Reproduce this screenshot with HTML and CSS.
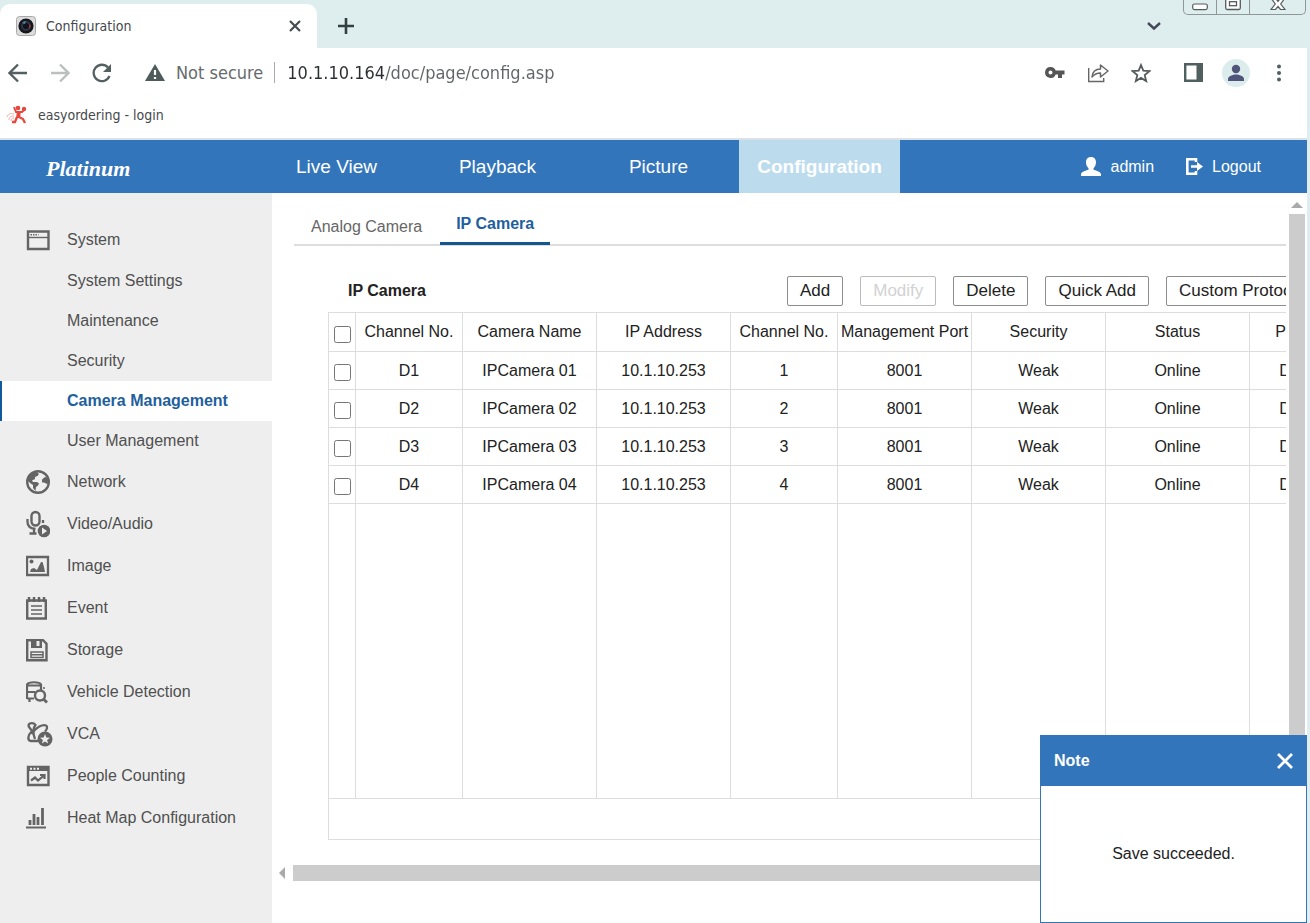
FILE: index.html
```html
<!doctype html>
<html lang="en">
  <head>
    <meta charset="UTF-8" />
    <meta name="viewport" content="width=device-width, initial-scale=1.0" />
    <title>Configuration</title>
    <link rel="stylesheet" href="styles.css">
  </head>
  <body>
    <div class="browser">
      <div class="tab-strip">
        <div class="browser-tab">
          <svg width="20" height="20" viewBox="0 0 20 20">
            <rect x="0.5" y="0.5" width="19" height="19" rx="3" fill="#dcdcdc" stroke="#a9a9a9" />
            <circle cx="10" cy="10" r="7.6" fill="#15171c" />
            <circle cx="10" cy="10" r="5" fill="#2c3446" />
            <circle cx="10" cy="10" r="3" fill="#11131a" />
            <path d="M6 7a5 5 0 0 1 4-2l-1 3z" fill="#4b86a5" />
            <path d="M13 8l2 2-2 3z" fill="#a5373c" />
          </svg>
          <span class="browser-tab-title">Configuration</span>
          <button class="icon-btn" aria-label="Close tab">
            <svg width="12" height="12" viewBox="0 0 12 12"><path d="M1 1l10 10M11 1L1 11" stroke="#474c4e" stroke-width="2.2" /></svg>
          </button>
        </div>
        <button class="icon-btn new-tab" aria-label="New tab">
          <svg width="16" height="16" viewBox="0 0 16 16"><path d="M8 0v16M0 8h16" stroke="#33403f" stroke-width="2.6" /></svg>
        </button>
        <button class="icon-btn tab-search" aria-label="Search tabs">
          <svg width="14" height="10" viewBox="0 0 14 10"><path d="M1 2l6 5.5L13 2" fill="none" stroke="#43495a" stroke-width="2.4" /></svg>
        </button>
        <div class="window-controls">
          <button aria-label="Minimize">
            <svg width="16" height="14" viewBox="0 0 16 14"><rect x="0.7" y="4" width="14.6" height="5.6" rx="1.8" fill="#fff" stroke="#555b5d" stroke-width="1.2" /></svg>
          </button>
          <button aria-label="Maximize">
            <svg width="16" height="14" viewBox="0 0 16 14"><path d="M.7-2v10q0 1.500 1.500 1.500h11.600q1.500 0 1.500-1.500V-2z" fill="#fff" stroke="#555b5d" stroke-width="1.300" /><rect x="4.500" y="1.700" width="7" height="4" fill="#fff" stroke="#555b5d" stroke-width="1.300" /></svg>
          </button>
          <button class="wide" aria-label="Close">
            <svg width="16" height="14" viewBox="0 0 16 14"><path d="M1-2h4.500L8 1.500 10.500-2H15l-4.300 6L15 9.500h-4.500L8 6.500 5.500 9.500H1L5.300 4z" fill="#fff" stroke="#555b5d" stroke-width="1.200" /></svg>
          </button>
        </div>
      </div>

      <div class="toolbar">
        <button class="icon-btn" aria-label="Back">
          <svg width="20" height="20" viewBox="0 0 20 20"><path d="M19 10H2M10 1.500L1.500 10l8.500 8.500" fill="none" stroke="#53605f" stroke-width="2.300" /></svg>
        </button>
        <button class="icon-btn" aria-label="Forward">
          <svg width="20" height="20" viewBox="0 0 20 20"><path d="M1 10h17M10 1.500l8.500 8.500-8.500 8.500" fill="none" stroke="#bcbfbf" stroke-width="2.300" /></svg>
        </button>
        <button class="icon-btn" aria-label="Reload">
          <svg width="20" height="20" viewBox="0 0 20 20"><path d="M17.500 13A8.200 8.200 0 1 1 16 4.500" fill="none" stroke="#53605f" stroke-width="2.300" /><path d="M19 1v8h-8z" fill="#53605f" /></svg>
        </button>
        <label class="not-secure" for="url">
          <svg width="20" height="18" viewBox="0 0 20 18"><path d="M10 0l10 17H0z" fill="#4d5b5a" /><path d="M10 6v5M10 13v2" stroke="#fff" stroke-width="2.200" /></svg>
          Not secure
        </label>
        <input class="url" id="url" type="text" value="10.1.10.164/doc/page/config.asp" />
        <div class="toolbar-actions">
          <button class="icon-btn" aria-label="Passwords">
            <svg width="20" height="12" viewBox="0 0 20 12"><path d="M5.500 0a5.500 5.500 0 1 0 5.200 7.500H13V11h4V7.500H19.500V3.500H10.700A5.500 5.500 0 0 0 5.500 0zm0 3.500a2 2 0 1 1 0 4 2 2 0 0 1 0-4z" fill="#555" fill-rule="evenodd" /></svg>
          </button>
          <button class="icon-btn" aria-label="Share">
            <svg width="22" height="20" viewBox="0 0 22 20"><path d="M1.700 5v13.500h15V15" fill="none" stroke="#666" stroke-width="1.400" /><path d="M5 14c.5-5 3.500-8 8.500-8V2l7.500 6-7.500 6v-4c-4 0-6 1-8.500 4z" fill="none" stroke="#666" stroke-width="1.500" stroke-linejoin="round" /></svg>
          </button>
          <button class="icon-btn" aria-label="Bookmark">
            <svg width="20" height="20" viewBox="0 0 20 20"><path d="M10 2l2.300 5.600 6.100.5-4.700 4 1.500 6L10 14.900l-5.200 3.200 1.500-6-4.700-4 6.100-.5z" fill="none" stroke="#555b5b" stroke-width="1.800" /></svg>
          </button>
          <button class="icon-btn side-panel" aria-label="Side panel">
            <svg width="19" height="19" viewBox="0 0 19 19"><path d="M1.200 1.200h16.600v16.600H1.200z" fill="#fff" stroke="#4f605f" stroke-width="2.400" /><path d="M12.500 1H18v17h-5.500z" fill="#4f605f" /></svg>
          </button>
          <button class="icon-btn profile" aria-label="Profile">
            <svg width="28" height="28" viewBox="1 1 28 28"><circle cx="15" cy="15" r="14" fill="#dcecec" /><circle cx="15" cy="11" r="4.200" fill="#51547a" /><path d="M7 23v-2c0-3 5-4.500 8-4.500s8 1.500 8 4.500v2z" fill="#51547a" /></svg>
          </button>
          <button class="icon-btn menu-btn" aria-label="Menu">
            <svg width="6" height="20" viewBox="0 0 6 20"><g fill="#4f605f"><circle cx="3" cy="3.500" r="2" /><circle cx="3" cy="10" r="2" /><circle cx="3" cy="16.500" r="2" /></g></svg>
          </button>
        </div>
      </div>

      <div class="bookmarks">
        <a href="#">
          <svg width="22" height="20" viewBox="0 0 22 20"><circle cx="12" cy="3" r="2.300" fill="#e8473d" /><path d="M8 2l2 5h6l3-3" fill="none" stroke="#e8473d" stroke-width="2" /><path d="M11 6h4l-1 7h-4z" fill="#e8473d" /><path d="M13 12l4 2 2 4M11 12l-2 5H6" fill="none" stroke="#e8473d" stroke-width="2.300" /><circle cx="18" cy="4" r="2.200" fill="#e8473d" /><path d="M8 9c-4-1-6 0-7 3M8 11c-4 0-5 2-5 4M8 13c-2 0-3 1-3 3" fill="none" stroke="#f3aaa5" stroke-width="1" /></svg>
          easyordering - login
        </a>
      </div>
    </div>

    <div class="app">
      <header class="app-header">
        <div class="logo">Platinum</div>
        <nav class="main-nav">
          <a href="#">Live View</a>
          <a href="#">Playback</a>
          <a href="#">Picture</a>
          <a href="#" class="active">Configuration</a>
        </nav>
        <div class="user-links">
          <a href="#">
            <svg width="20" height="19" viewBox="0 0 20 19"><path d="M10 0c3.300 0 5 2.200 5 5.300 0 2.300-1 4.700-2.500 6v1.500c3 .8 7.500 2 7.500 4.700V19H0v-1.500c0-2.700 4.500-3.900 7.500-4.700v-1.500C6 10 5 7.600 5 5.300 5 2.200 6.700 0 10 0z" fill="#fff" /></svg>
            admin
          </a>
          <a href="#">
            <svg width="17" height="17" viewBox="0 0 17 17"><path d="M10 4V1.300H1.300v14.400H10V13" fill="none" stroke="#fff" stroke-width="2.600" /><path d="M5 7.200h6V4l6 4.500-6 4.500V9.800H5z" fill="#fff" /></svg>
            Logout
          </a>
        </div>
      </header>

      <div class="app-body">
        <aside class="sidebar">
          <a href="#" class="item">
            <svg width="24" height="24" viewBox="0 0 24 24"><path d="M2 3.500h20.500v17.500H2z" fill="none" stroke="#646464" stroke-width="2.400" /><path d="M2 9.500h20" stroke="#646464" stroke-width="1.400" /><path d="M4.500 6.700h8" stroke="#646464" stroke-width="1.500" stroke-dasharray="1.500 1" /></svg>
            System
          </a>
          <a href="#" class="sub-item">System Settings</a>
          <a href="#" class="sub-item">Maintenance</a>
          <a href="#" class="sub-item">Security</a>
          <a href="#" class="sub-item active">Camera Management</a>
          <a href="#" class="sub-item">User Management</a>
          <a href="#" class="item">
            <svg width="24" height="24" viewBox="0 0 24 24"><circle cx="12" cy="12" r="10.800" fill="none" stroke="#646464" stroke-width="2.400" /><path d="M2 11c0-5 4-9 9-9l2 2-1.500 2L9 7v2l-3 1.500 1 1.500h4l2 1.500-1 2-2 1.500-.5 4L7 18v-3l-3-2zM16 9.500L19 7l3 1 .500 4-1.500 2-3-1.500h-2z" fill="#646464" /></svg>
            Network
          </a>
          <a href="#" class="item">
            <svg width="24" height="28" viewBox="0 0 24 28"><rect x="5.500" y="2" width="8" height="13.500" rx="4" fill="none" stroke="#646464" stroke-width="2.400" /><path d="M1.500 9v3c0 4 3 6.500 8 7M8 18v5M3.500 23.500h7M17 10v3" fill="none" stroke="#646464" stroke-width="2.300" /><circle cx="18" cy="21" r="6.300" fill="#646464" /><path d="M16 17.500l5 3.500-5 3.500z" fill="#eee" /></svg>
            Video/Audio
          </a>
          <a href="#" class="item">
            <svg width="24" height="24" viewBox="0 0 24 24"><path d="M1 3h21v18H1z" fill="none" stroke="#646464" stroke-width="2.300" /><circle cx="5.500" cy="7.500" r="2" fill="#646464" /><path d="M4 18l1-3 3-1 3 2 4-8h1.500L18 13l1 5z" fill="#646464" /></svg>
            Image
          </a>
          <a href="#" class="item">
            <svg width="24" height="24" viewBox="0 0 24 24"><path d="M1.200 4.500h18.600V22.500H1.200z" fill="none" stroke="#646464" stroke-width="2.400" /><path d="M3 1v5M8 1v5M13 1v5M18 1v5" stroke="#646464" stroke-width="2.500" /><path d="M5 10h11M5 14h11M5 18h11" stroke="#646464" stroke-width="1.400" /></svg>
            Event
          </a>
          <a href="#" class="item">
            <svg width="24" height="24" viewBox="0 0 24 24"><path d="M1.200 2.200H17l3.500 3.500v16.500H1.200z" fill="none" stroke="#646464" stroke-width="2.400" /><path d="M5 2h11v8H5z" fill="#646464" /><path d="M10.500 3h3v5h-3z" fill="#eee" /><path d="M5 14h12v5.500H5zM5 16.800h12" fill="none" stroke="#646464" stroke-width="1.500" /></svg>
            Storage
          </a>
          <a href="#" class="item">
            <svg width="24" height="24" viewBox="0 0 24 24"><path d="M1 4.500c1.500-3 12.500-3 14 0v6M1 4v15M1 5.500h14M1 12h8M1 18.500h7M3.500 18v4" fill="none" stroke="#646464" stroke-width="2.200" /><circle cx="14" cy="15.500" r="5" fill="#eee" stroke="#646464" stroke-width="2.400" /><path d="M17.500 19L21 22.500" stroke="#646464" stroke-width="2.800" /><circle cx="18" cy="8" r="1" fill="#646464" /></svg>
            Vehicle Detection
          </a>
          <a href="#" class="item">
            <svg width="28" height="26" viewBox="0 0 28 26"><path d="M9 3C5 1 1.500 2.500 3 6l3 4c-4 4-5 9-1.500 10H12M5.500 13C10 6 17 3 20 4.500c2 1 1 4-1 6M10 3c-3 4-3 10-1 15" fill="none" stroke="#646464" stroke-width="2.300" /><circle cx="19" cy="18" r="7.500" fill="#646464" /><path d="M19 13l1.300 3.500 3.700.2-2.900 2.300 1 3.500-3.100-2-3.100 2 1-3.500-2.900-2.300 3.700-.2z" fill="#eee" /></svg>
            VCA
          </a>
          <a href="#" class="item">
            <svg width="24" height="24" viewBox="0 0 24 24"><path d="M2 3h20.500v18H2z" fill="none" stroke="#646464" stroke-width="2.400" /><path d="M2 3h20v4H2z" fill="#646464" /><path d="M4 4.700h9" stroke="#eee" stroke-width="2" stroke-dasharray="2 1.500" /><path d="M5 16.500l4-3 3 3 6-5M14 11h4.500v4" fill="none" stroke="#646464" stroke-width="2.200" /></svg>
            People Counting
          </a>
          <a href="#" class="item">
            <svg width="24" height="24" viewBox="0 0 24 24"><path d="M0 21.500h20" stroke="#646464" stroke-width="2" /><path d="M4 19v-5M8 19V8M12 19v-8M16.500 19V2" stroke="#646464" stroke-width="2.800" /></svg>
            Heat Map Configuration
          </a>
        </aside>

        <main class="content">
          <div class="scroll-area">
            <div class="tabs">
              <a href="#">Analog Camera</a>
              <a href="#" class="active">IP Camera</a>
            </div>

            <section class="panel">
              <div class="panel-head">
                <h2>IP Camera</h2>
                <button>Add</button>
                <button disabled>Modify</button>
                <button>Delete</button>
                <button>Quick Add</button>
                <button>Custom Protocol</button>
              </div>
              <table>
                <colgroup>
                  <col class="col-check" />
                  <col class="col-narrow" />
                  <col class="col-mid" />
                  <col class="col-mid" />
                  <col class="col-narrow" />
                  <col class="col-mid" />
                  <col class="col-mid" />
                  <col class="col-wide" />
                  <col class="col-last" />
                </colgroup>
                <thead>
                  <tr>
                    <th><input type="checkbox" aria-label="Select all" /></th>
                    <th>Channel No.</th>
                    <th>Camera Name</th>
                    <th>IP Address</th>
                    <th>Channel No.</th>
                    <th>Management Port</th>
                    <th>Security</th>
                    <th>Status</th>
                    <th>Protocol</th>
                  </tr>
                </thead>
                <tbody>
                  <tr>
                    <td><input type="checkbox" aria-label="Select D1" /></td>
                    <td>D1</td>
                    <td>IPCamera 01</td>
                    <td>10.1.10.253</td>
                    <td>1</td>
                    <td>8001</td>
                    <td>Weak</td>
                    <td>Online</td>
                    <td>Default</td>
                  </tr>
                  <tr>
                    <td><input type="checkbox" aria-label="Select D2" /></td>
                    <td>D2</td>
                    <td>IPCamera 02</td>
                    <td>10.1.10.253</td>
                    <td>2</td>
                    <td>8001</td>
                    <td>Weak</td>
                    <td>Online</td>
                    <td>Default</td>
                  </tr>
                  <tr>
                    <td><input type="checkbox" aria-label="Select D3" /></td>
                    <td>D3</td>
                    <td>IPCamera 03</td>
                    <td>10.1.10.253</td>
                    <td>3</td>
                    <td>8001</td>
                    <td>Weak</td>
                    <td>Online</td>
                    <td>Default</td>
                  </tr>
                  <tr>
                    <td><input type="checkbox" aria-label="Select D4" /></td>
                    <td>D4</td>
                    <td>IPCamera 04</td>
                    <td>10.1.10.253</td>
                    <td>4</td>
                    <td>8001</td>
                    <td>Weak</td>
                    <td>Online</td>
                    <td>Default</td>
                  </tr>
                  <tr class="filler">
                    <td></td><td></td><td></td><td></td><td></td><td></td><td></td><td></td><td></td>
                  </tr>
                </tbody>
                <tfoot>
                  <tr><td colspan="9"></td></tr>
                </tfoot>
              </table>
            </section>
          </div>
          <div class="vbar">
            <span class="arrow-up"></span>
            <span class="thumb"></span>
          </div>
          <div class="hbar">
            <span class="arrow-left"></span>
            <span class="thumb"></span>
          </div>
        </main>
      </div>
    </div>

    <div class="note" role="dialog" aria-labelledby="note-title">
      <div class="note-head">
        <h3 id="note-title">Note</h3>
        <button class="icon-btn" aria-label="Close note">
          <svg width="16" height="16" viewBox="0 0 16 16"><path d="M1 1l14 14M15 1L1 15" stroke="#fff" stroke-width="2.800" /></svg>
        </button>
      </div>
      <p>Save succeeded.</p>
    </div>
  </body>
</html>
```
FILE: styles.css
```css
* {
  box-sizing: border-box;
}

body {
  margin: 0;
  padding-right: 3px;
  min-height: 100vh;
  display: flex;
  flex-direction: column;
  background-color: #deeded;
  font-family: "Liberation Sans", Arial, sans-serif;
  font-size: 16px;
  color: #222;
}

a {
  color: inherit;
  text-decoration: none;
}

svg {
  display: block;
  flex: none;
}

.icon-btn {
  display: flex;
  padding: 0;
  border: none;
  background: none;
  cursor: pointer;
}

/* browser chrome */
.browser {
  font-family: "DejaVu Sans Condensed", "DejaVu Sans", Tahoma, sans-serif;
  border-bottom: 2px solid #d9e2e8;
}

.tab-strip {
  display: flex;
  align-items: center;
  height: 48px;
  padding-top: 4px;
}

.browser-tab {
  display: flex;
  align-items: center;
  gap: 10px;
  width: 317px;
  height: 44px;
  padding: 0 16px;
  background-color: #fff;
  border-radius: 10px 10px 0 0;
  font-size: 14px;
  color: #45494c;
}

.browser-tab-title {
  flex: 1;
}

.new-tab {
  margin-left: 21px;
}

.tab-search {
  margin-left: auto;
  margin-right: 146px;
}

.window-controls {
  position: absolute;
  top: 0;
  right: 4px;
  display: flex;
  height: 15px;
  border: 1px solid #8f9797;
  border-top: none;
  border-radius: 0 0 5px 5px;
}

.window-controls button {
  display: flex;
  justify-content: center;
  width: 33px;
  padding: 0;
  border: none;
  border-right: 1px solid #8f9797;
  background: none;
}

.window-controls .wide {
  width: 55px;
  border-right: none;
}

.toolbar {
  display: flex;
  align-items: center;
  gap: 22px;
  height: 49px;
  padding: 0 25px 0 8px;
  background-color: #fff;
  font-size: 18px;
}

.not-secure {
  display: flex;
  align-items: center;
  gap: 11px;
  margin-left: 11px;
  padding-right: 11px;
  border-right: 1px solid #aaa;
  color: #666b6d;
  white-space: nowrap;
}

.url {
  flex: 1;
  min-width: 0;
  margin-left: -10px;
  padding: 0;
  border: none;
  outline: none;
  font: inherit;
  color: transparent;
  background-image: linear-gradient(to right, #2b2e30 98px, #5f6466 98px);
  -webkit-background-clip: text;
  background-clip: text;
}

.toolbar-actions {
  display: flex;
  align-items: center;
  gap: 22px;
}

.side-panel {
  margin-left: 11px;
}

.profile {
  margin-left: -3px;
}

.menu-btn {
  margin-left: 4px;
}

.bookmarks {
  height: 41px;
  padding: 8px 6px;
  background-color: #fff;
  font-size: 14px;
  color: #45494c;
}

.bookmarks a {
  display: inline-flex;
  align-items: center;
  gap: 10px;
}

/* web client */
.app {
  flex: 1;
  display: flex;
  flex-direction: column;
}

.app-header {
  display: flex;
  height: 53px;
  background-color: #3275bb;
  color: #fff;
}

.logo {
  width: 256px;
  padding-left: 46px;
  font-family: "Brush Script MT", "Liberation Serif", cursive;
  font-size: 22px;
  font-style: italic;
  font-weight: bold;
  line-height: 58px;
}

.main-nav {
  display: flex;
  font-size: 19px;
  line-height: 53px;
  text-align: center;
}

.main-nav a {
  width: 161px;
}

.main-nav .active {
  background-color: #bcdcee;
  font-weight: bold;
}

.user-links {
  display: flex;
  gap: 32px;
  margin-left: auto;
  padding-right: 46px;
}

.user-links a {
  display: flex;
  align-items: center;
  gap: 9px;
}

.app-body {
  flex: 1;
  display: flex;
}

.sidebar {
  flex: 0 0 272px;
  padding: 26px 0;
  background-color: #eee;
  color: #505050;
}

.item {
  display: grid;
  grid-template-columns: 41px 1fr;
  align-items: center;
  height: 42px;
  padding-left: 26px;
}

.sub-item {
  display: block;
  height: 40px;
  padding-left: 67px;
  line-height: 40px;
}

.sub-item.active {
  padding-left: 65px;
  border-left: 2px solid #12599a;
  background-color: #fff;
  color: #1f5f9e;
  font-weight: bold;
}

.content {
  flex: 1;
  min-width: 0;
  display: grid;
  grid-template-columns: minmax(0, 1fr) 21px;
  grid-template-rows: 672px 16px;
  background-color: #fff;
}

.scroll-area {
  overflow: hidden;
  padding-left: 22px;
}

.tabs {
  display: flex;
  gap: 1px;
  height: 53px;
  border-bottom: 2px solid #ddd;
}

.tabs a {
  padding: 0 17px;
  line-height: 68px;
  color: #666;
}

.tabs .active {
  height: 52px;
  padding: 0 16px;
  border-bottom: 3px solid #12578f;
  line-height: 62px;
  color: #1f5f9e;
  font-weight: bold;
}

.panel {
  width: 1066px;
  padding: 30px 0 0 34px;
}

.panel-head {
  display: flex;
  align-items: center;
  gap: 17px;
  height: 30px;
  margin-bottom: 6px;
}

.panel-head h2 {
  flex: 0 0 442px;
  margin: 0;
  padding-left: 20px;
  font-size: 16px;
}

.panel-head button {
  flex: none;
  height: 30px;
  padding: 0 12px;
  border: 1px solid #8c8c8c;
  border-radius: 2px;
  background-color: #fff;
  font-family: inherit;
  font-size: 17px;
  color: #222;
}

.panel-head button:disabled {
  border-color: #bbb;
  color: #d2d2d2;
}

table {
  width: 1032px;
  table-layout: fixed;
  border-collapse: collapse;
}

.col-check {
  width: 27px;
}

.col-narrow {
  width: 107px;
}

.col-mid {
  width: 134px;
}

.col-wide {
  width: 144px;
}

.col-last {
  width: 110px;
}

th,
td {
  height: 38px;
  padding: 0;
  border: 1px solid #ddd;
  font-weight: normal;
  text-align: center;
  white-space: nowrap;
}

thead th {
  height: 39px;
}

th input,
td input {
  display: block;
  width: 17px;
  height: 17px;
  margin: 4px auto 0;
}

.filler td {
  height: 295px;
}

tfoot td {
  height: 41px;
}

.vbar {
  display: flex;
  flex-direction: column;
  align-items: center;
  padding: 9px 2px 0 3px;
}

.arrow-up {
  border: 6px solid transparent;
  border-top: none;
  border-bottom: 6px solid #aaa;
  margin-bottom: 6px;
}

.vbar .thumb {
  flex: 1;
  width: 16px;
  background-color: #ccc;
}

.hbar {
  display: flex;
  align-items: center;
  padding-left: 7px;
}

.arrow-left {
  border: 6px solid transparent;
  border-left: none;
  border-right: 6px solid #aaa;
  margin-right: 8px;
}

.hbar .thumb {
  flex: 1;
  height: 16px;
  background-color: #ccc;
}

/* popup */
.note {
  position: fixed;
  right: 3px;
  bottom: 0;
  display: flex;
  flex-direction: column;
  width: 267px;
  height: 188px;
  border: 1px solid #3275bb;
  background-color: #fff;
}

.note-head {
  display: flex;
  align-items: center;
  justify-content: space-between;
  height: 50px;
  padding: 0 13px;
  background-color: #3275bb;
  color: #fff;
}

.note-head h3 {
  margin: 0;
  font-size: 16px;
}

.note p {
  margin: auto;
}
```
